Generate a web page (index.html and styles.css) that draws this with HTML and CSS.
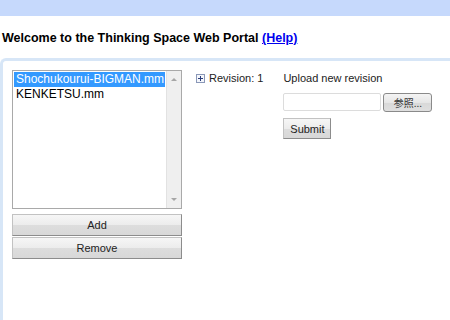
FILE: index.html
```
<!DOCTYPE html>
<html lang="en">
<head>
    <meta charset="UTF-8">
    <title>Thinking Space Web Portal</title>
    <link rel="stylesheet" href="styles.css">
</head>
<body>
    <div class="top-bar"></div>
    <h1 class="welcome">Welcome to the Thinking Space Web Portal <a href="#">(Help)</a></h1>

    <div class="panel">
        <div class="file-column">
            <div class="listbox">
                <div class="list-items">
                    <div class="list-item selected">Shochukourui-BIGMAN.mm</div>
                    <div class="list-item">KENKETSU.mm</div>
                </div>
                <div class="scrollbar">
                    <span class="arrow up"></span>
                    <span class="arrow down"></span>
                </div>
            </div>
            <button class="wide-button">Add</button>
            <button class="wide-button">Remove</button>
        </div>

        <div class="revision">
            <span class="expander"></span>
            <span>Revision: 1</span>
        </div>

        <div class="upload">
            <div class="upload-label">Upload new revision</div>
            <div class="file-row">
                <span class="file-input"></span>
                <button class="browse-button">参照...</button>
            </div>
            <button class="submit-button">Submit</button>
        </div>
    </div>
</body>
</html>
```

FILE: styles.css
```
body {
    margin: 0;
    font-family: "Liberation Sans", Arial, "Noto Sans CJK JP", sans-serif;
    font-size: 11px;
    color: #000;
    background-color: #fff;
    overflow: hidden;
}
.top-bar {
    height: 16px;
    background-color: #c6d9fc;
}
.welcome {
    margin: 14px 0 0 2px;
    font-size: 12.5px;
    font-weight: bold;
    line-height: 16px;
}
.welcome a {
    color: #0000ee;
}
.panel {
    display: flex;
    align-items: flex-start;
    margin: 12px 0 0 0;
    height: 250px;
    border: 3px solid #d7e6f7;
    border-right: none;
    border-bottom: none;
    border-top-left-radius: 6px;
    padding: 9px 0 0 9px;
}

/* file list */
.file-column {
    display: flex;
    flex-direction: column;
    width: 170px;
}
.listbox {
    display: flex;
    height: 137px;
    border: 1px solid #a9a9a9;
    margin-bottom: 5px;
}
.list-items {
    flex: 1;
    padding: 1px;
}
.list-item {
    font-size: 12px;
    line-height: 15px;
    padding-left: 2px;
    white-space: nowrap;
}
.list-item.selected {
    background-color: #3399ff;
    color: #fff;
}
.scrollbar {
    width: 14px;
    background-color: #efefef;
    border-left: 1px solid #e2e2e2;
    display: flex;
    flex-direction: column;
    justify-content: space-between;
    align-items: center;
    padding: 7px 0;
}
.arrow {
    width: 0;
    height: 0;
    border-left: 3px solid transparent;
    border-right: 3px solid transparent;
}
.arrow.up {
    border-bottom: 3px solid #a6a6a6;
}
.arrow.down {
    border-top: 3px solid #a6a6a6;
}
.wide-button {
    height: 22px;
    margin-bottom: 1px;
    font-family: inherit;
    font-size: 11px;
    color: #222;
    border: 1px solid #c2c2c2;
    border-right-color: #8c8c8c;
    border-bottom-color: #8c8c8c;
    border-radius: 0;
    background: linear-gradient(#f6f6f6, #ececec 50%, #dddddd 51%, #d8d8d8);
    padding: 0;
}

/* revision */
.revision {
    display: flex;
    align-items: center;
    gap: 4px;
    margin: 1px 0 0 14px;
    color: #222;
    line-height: 14px;
    white-space: nowrap;
}
.expander {
    position: relative;
    width: 7px;
    height: 7px;
    border: 1px solid #8a98b8;
    background-color: #f4f6fb;
}
.expander::before,
.expander::after {
    content: "";
    position: absolute;
    background-color: #2a3d7a;
}
.expander::before {
    left: 1px;
    top: 3px;
    width: 5px;
    height: 1px;
}
.expander::after {
    left: 3px;
    top: 1px;
    width: 1px;
    height: 5px;
}

/* upload */
.upload {
    margin-left: 20px;
    color: #222;
}
.upload-label {
    line-height: 14px;
    margin-top: 1px;
    margin-bottom: 8px;
}
.file-row {
    display: flex;
    align-items: flex-start;
    gap: 2px;
    margin-bottom: 6px;
}
.file-input {
    width: 96px;
    height: 16px;
    border: 1px solid #dcdcdc;
    border-radius: 2px;
}
.browse-button {
    width: 49px;
    height: 19px;
    font-family: "Noto Sans CJK JP", sans-serif;
    font-size: 10px;
    color: #333;
    padding: 0;
    border: 1px solid #8a8a8a;
    border-radius: 3px;
    background: linear-gradient(#f4f4f4, #e6e6e6 50%, #d8d8d8 51%, #dfdfdf);
}
.submit-button {
    width: 48px;
    height: 21px;
    font-family: inherit;
    font-size: 11px;
    color: #222;
    padding: 0;
    border: 1px solid #c2c2c2;
    border-right-color: #8c8c8c;
    border-bottom-color: #8c8c8c;
    border-radius: 0;
    background: linear-gradient(#f6f6f6, #ececec 50%, #dddddd 51%, #d8d8d8);
}
```
